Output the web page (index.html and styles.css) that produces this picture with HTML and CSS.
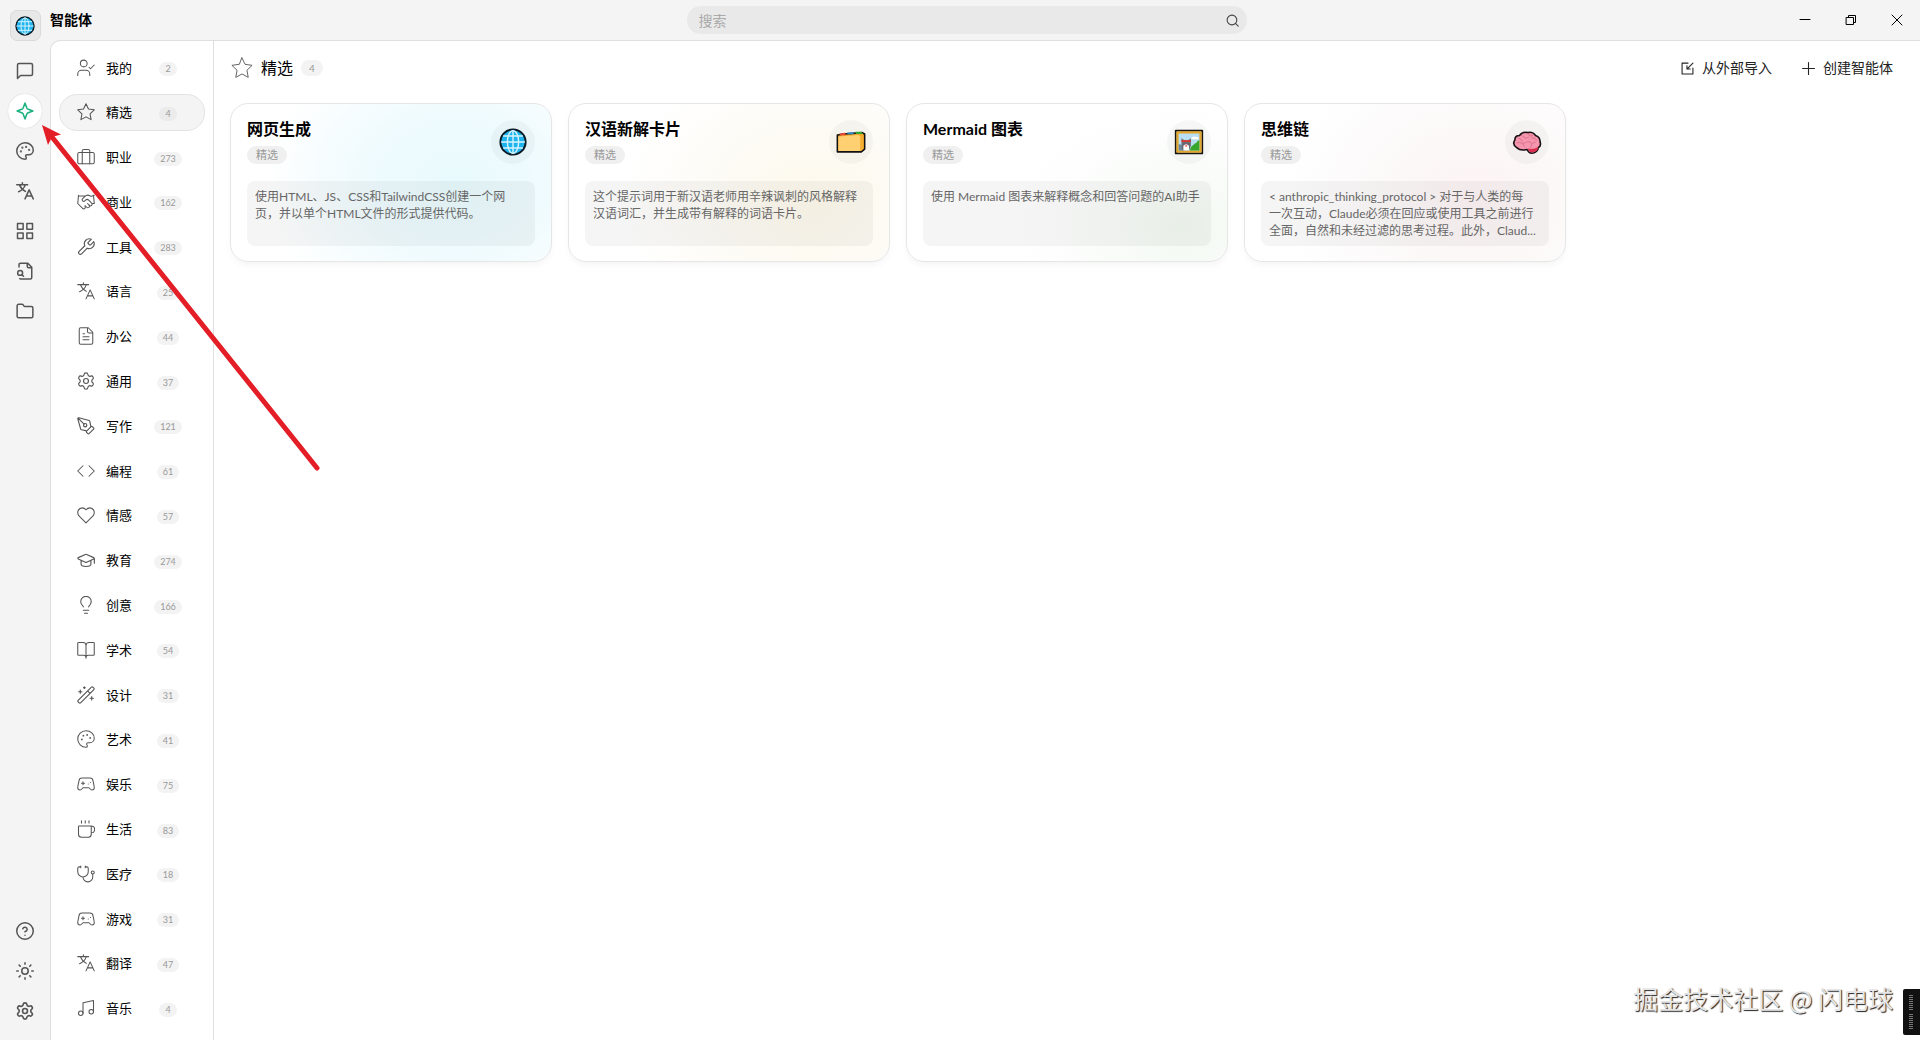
FILE: index.html
```html
<!DOCTYPE html>
<html lang="zh-CN">
<head>
<meta charset="utf-8">
<title>智能体</title>
<link rel="stylesheet" href="styles.css">
</head>
<body>
<svg class="sprite" aria-hidden="true">
  <symbol id="globe" viewBox="0 0 28 28"><circle cx="14" cy="14" r="12.6" fill="#20b4ee" stroke="#0b1a24" stroke-width="2"/><g fill="none" stroke="#d5f4ff" stroke-width="1.4"><ellipse cx="14" cy="14" rx="5.6" ry="11.4"/><path d="M14 2.6v22.8M2.6 14h22.8M4.6 8h18.8M4.6 20h18.8"/></g></symbol>
  <symbol id="message" viewBox="0 0 24 24"><path d="M22 16a2 2 0 0 1-2 2H6l-4 4V4a2 2 0 0 1 2-2h16a2 2 0 0 1 2 2z"/></symbol>
  <symbol id="spark" viewBox="0 0 24 24"><path d="M12 1.500l2.600 6.900a2 2 0 0 0 1 1L22.500 12l-6.900 2.600a2 2 0 0 0-1 1L12 22.500l-2.600-6.900a2 2 0 0 0-1-1L1.500 12l6.900-2.600a2 2 0 0 0 1-1z"/></symbol>
  <symbol id="palette" viewBox="0 0 24 24"><g fill="currentColor"><circle cx="13.500" cy="6.500" r=".5"/><circle cx="17.500" cy="10.500" r=".5"/><circle cx="8.500" cy="7.500" r=".5"/><circle cx="6.500" cy="12.500" r=".5"/></g><path d="M12 1C6 1 1 6 1 12s5 11 11 11c1 0 1.800-.8 1.800-1.800 0-.5-.2-.9-.5-1.200-.3-.3-.5-.7-.5-1.200a1.800 1.800 0 0 1 1.800-1.800h2.400c3.300 0 6-2.700 6-6C23 5.400 18 1 12 1z"/></symbol>
  <symbol id="translate" viewBox="0 0 24 24"><path d="M1 3.500h14.500M8.500 1v2.500M12.500 3.500c-1.500 4.500-4.500 7.500-9 9.500M4.500 3.500c1.500 4 4 7 8 9M12 22.500l5.500-12 5.500 12M13.900 18.500h7.200"/></symbol>
  <symbol id="grid" viewBox="0 0 24 24"><rect x="2" y="2" width="7.500" height="7.500"/><rect x="14.500" y="2" width="7.500" height="7.500"/><rect x="14.500" y="14.500" width="7.500" height="7.500"/><rect x="2" y="14.500" width="7.500" height="7.500"/></symbol>
  <symbol id="filesearch" viewBox="0 0 24 24"><path d="M15 1.500v4a2 2 0 0 0 2 2h4M5 22.200c.3.200.7.300 1.100.300H19a2 2 0 0 0 2-2V7l-5.500-5.500H6a2 2 0 0 0-2 2v3"/><path d="m10 19-2-2"/><circle cx="5.500" cy="14.500" r="3.300"/></symbol>
  <symbol id="folder" viewBox="0 0 24 24"><path d="M20.500 21a2 2 0 0 0 2-2V8a2 2 0 0 0-2-2h-8.400a2 2 0 0 1-1.690-.9L9.600 3.900A2 2 0 0 0 7.930 3H3.500a2 2 0 0 0-2 2v14a2 2 0 0 0 2 2z"/></symbol>
  <symbol id="help" viewBox="0 0 24 24"><circle cx="12" cy="12" r="11"/><path d="M9.090 9a3 3 0 0 1 5.830 1c0 2-3 3-3 3M12 17.500h.01"/></symbol>
  <symbol id="sun" viewBox="0 0 24 24"><circle cx="12" cy="12" r="4.300"/><path d="M12 1v2M12 21v2M4.200 4.200l1.500 1.500M18.300 18.300l1.500 1.500M1 12h2M21 12h2M5.700 18.300l-1.500 1.500M19.800 4.200l-1.500 1.500"/></symbol>
  <symbol id="gear" viewBox="1 1 22 22"><path d="M9.671 4.136a2.340 2.340 0 0 1 4.659 0 2.340 2.340 0 0 0 3.319 1.915 2.340 2.340 0 0 1 2.330 4.033 2.340 2.340 0 0 0 0 3.831 2.340 2.340 0 0 1-2.330 4.033 2.340 2.340 0 0 0-3.319 1.915 2.340 2.340 0 0 1-4.659 0 2.340 2.340 0 0 0-3.320-1.915 2.340 2.340 0 0 1-2.330-4.033 2.340 2.340 0 0 0 0-3.831A2.340 2.340 0 0 1 6.350 6.051a2.340 2.340 0 0 0 3.319-1.915"/><circle cx="12" cy="12" r="3"/></symbol>
  <symbol id="user" viewBox="0 0 24 24"><path d="M1 22v-2a5 5 0 0 1 5-5h6a5 5 0 0 1 5 5v2"/><circle cx="9" cy="6" r="4.500"/><path d="m16 11 2 2 5-5"/></symbol>
  <symbol id="star" viewBox="0 0 24 24"><path d="M12 1l3.300 7 7.700 1.100-5.600 5.400 1.400 7.700L12 18.500l-6.800 3.700 1.400-7.700L1 9.100 8.700 8z"/></symbol>
  <symbol id="case" viewBox="0 0 24 24"><rect x="1" y="6" width="22" height="15" rx="2"/><path d="M7 21V4a2 2 0 0 1 2-2h6a2 2 0 0 1 2 2v17"/></symbol>
  <symbol id="hands" viewBox="0 0 24 24"><path d="m11 17 2 2a1 1 0 1 0 3-3"/><path d="m14 14 2.500 2.500a1 1 0 1 0 3-3l-3.880-3.880a3 3 0 0 0-4.240 0l-.88.88a1 1 0 1 1-3-3l2.810-2.810a5.790 5.790 0 0 1 7.060-.87l.47.28a2 2 0 0 0 1.420.25L23 3M22 3l1 11h-2M2 3 1 14l6.500 6.500a1 1 0 1 0 3-3M2 4h8"/></symbol>
  <symbol id="wrench" viewBox="1 1 22 22"><path d="M14.700 6.300a1 1 0 0 0 0 1.400l1.600 1.600a1 1 0 0 0 1.400 0l3.770-3.770a6 6 0 0 1-7.940 7.940l-6.910 6.910a2.120 2.120 0 0 1-3-3l6.910-6.910a6 6 0 0 1 7.940-7.940z"/></symbol>
  <symbol id="doc" viewBox="0 0 24 24"><path d="M15 1H5a2 2 0 0 0-2 2v18a2 2 0 0 0 2 2h14a2 2 0 0 0 2-2V7zM14 1v5a2 2 0 0 0 2 2h5M8 9h2M8 13h8M8 17h8"/></symbol>
  <symbol id="pen" viewBox="1 1 22 22"><path d="M15.700 21.300a1 1 0 0 1-1.400 0l-1.600-1.600a1 1 0 0 1 0-1.400l5.600-5.600a1 1 0 0 1 1.400 0l1.600 1.600a1 1 0 0 1 0 1.400zM18 13l-1.400-6.900a1 1 0 0 0-.7-.8L3.200 2a1 1 0 0 0-1.200 1.200l3.500 12.700a1 1 0 0 0 .8.7L13 18M2.300 2.300l7.300 7.300"/><circle cx="11" cy="11" r="2"/></symbol>
  <symbol id="code" viewBox="0 0 24 24"><path d="m16 19 7-7-7-7M8 5l-7 7 7 7"/></symbol>
  <symbol id="heart" viewBox="0 0 24 24"><path d="M12 22.500 3 13.500C-1 9 1.500 2.500 7 2.500c2 0 3.500.8 5 2.500 1.500-1.700 3-2.500 5-2.500 5.500 0 8 6.500 4 11z"/></symbol>
  <symbol id="cap" viewBox="1 1 22 22"><path d="M21.400 10.900a1 1 0 0 0 0-1.800L12.800 5.200a2 2 0 0 0-1.600 0L2.600 9.100a1 1 0 0 0 0 1.800l8.600 3.900a2 2 0 0 0 1.600 0zM22.200 10v6M6 12.500V17a6 3 0 0 0 12 0v-4.500"/></symbol>
  <symbol id="bulb" viewBox="0 0 24 24"><path d="M15.500 14.500c.2-1.100.9-2 1.800-2.800A7 7 0 0 0 19 7.500a7 7 0 0 0-14 0c0 1.700.7 3.100 1.700 4.200.9.800 1.600 1.700 1.800 2.800M8.500 19h7M10 23h4"/></symbol>
  <symbol id="book" viewBox="0 0 24 24"><path d="M12 6v17M2 19a1 1 0 0 1-1-1V3a1 1 0 0 1 1-1h6a4 4 0 0 1 4 4 4 4 0 0 1 4-4h6a1 1 0 0 1 1 1v15a1 1 0 0 1-1 1h-7a3 3 0 0 0-3 3 3 3 0 0 0-3-3z"/></symbol>
  <symbol id="wand" viewBox="1 1 22 22"><path d="m21.640 3.640-1.280-1.280a1.210 1.210 0 0 0-1.720 0L2.360 18.640a1.210 1.210 0 0 0 0 1.720l1.280 1.280a1.200 1.200 0 0 0 1.720 0L21.640 5.360a1.200 1.200 0 0 0 0-1.720M14 7l3 3M5 6v4M19 14v4M10 2v2M7 8H3M21 16h-4M11 3H9"/></symbol>
  <symbol id="game" viewBox="0 0 24 24"><path d="M6 11h4M8 9v4M15 12h.01M18 10h.01M17.300 4H6.700a4 4 0 0 0-4 3.600C2.600 8.400 1 14.500 1 17a3 3 0 0 0 3 3c1 0 1.500-.5 2-1l2-2h8l2 2c.5.500 1 1 2 1a3 3 0 0 0 3-3c0-2.500-1.600-8.600-1.700-9.400a4 4 0 0 0-4-3.600z"/></symbol>
  <symbol id="cup" viewBox="0 0 24 24"><path d="M6 1v3M11 1v3M16 1v3M18 8a1 1 0 0 1 1 1v10a4 4 0 0 1-4 4H6a4 4 0 0 1-4-4V9a1 1 0 0 1 1-1h16a4 4 0 1 1 0 9"/></symbol>
  <symbol id="steth" viewBox="0 0 24 24"><path d="M11 1.500v2M5 1.500v2M5 2.500H3a2 2 0 0 0-2 2V9a7 7 0 0 0 14 0V4.500a2 2 0 0 0-2-2h-2M8 16a6.500 6.500 0 0 0 13 0v-4"/><circle cx="21" cy="10" r="2"/></symbol>
  <symbol id="music" viewBox="0 0 24 24"><path d="M8 19V5l14-3v14"/><circle cx="5" cy="19" r="3"/><circle cx="19" cy="17" r="3"/></symbol>
  <symbol id="search" viewBox="0 0 24 24"><circle cx="11" cy="11" r="9"/><path d="m17.500 17.500 5 5"/></symbol>
  <symbol id="import" viewBox="0 0 24 24"><path d="M13 2H2v20h20V11M22 2 11 13M11 7v6h6"/></symbol>
  <symbol id="plus" viewBox="0 0 24 24"><path d="M12 1v22M1 12h22"/></symbol>
</svg>

<div class="app">
  <nav class="rail" aria-label="主导航">
    <button class="avatar" aria-label="头像"><svg><use href="#globe"/></svg></button>
    <button class="rail-btn" aria-label="助手"><svg><use href="#message"/></svg></button>
    <button class="rail-btn active" aria-label="智能体"><svg><use href="#spark"/></svg></button>
    <button class="rail-btn" aria-label="绘画"><svg><use href="#palette"/></svg></button>
    <button class="rail-btn" aria-label="翻译"><svg><use href="#translate"/></svg></button>
    <button class="rail-btn" aria-label="小程序"><svg><use href="#grid"/></svg></button>
    <button class="rail-btn" aria-label="知识库"><svg><use href="#filesearch"/></svg></button>
    <button class="rail-btn" aria-label="文件"><svg><use href="#folder"/></svg></button>
    <div class="rail-end">
      <button class="rail-btn" aria-label="帮助"><svg><use href="#help"/></svg></button>
      <button class="rail-btn" aria-label="主题"><svg><use href="#sun"/></svg></button>
      <button class="rail-btn" aria-label="设置"><svg><use href="#gear"/></svg></button>
    </div>
  </nav>

  <div class="window">
    <header class="titlebar">
      <h1 class="app-title">智能体</h1>
      <label class="search"><input type="text" placeholder="搜索" aria-label="搜索"><svg><use href="#search"/></svg></label>
      <div class="controls">
        <button aria-label="最小化"><svg viewBox="0 0 12 12"><path d="M1 5.500h10"/></svg></button>
        <button aria-label="还原"><svg viewBox="0 0 12 12"><path d="M1.500 3.500h7v7h-7zM3.500 3.500v-2h7v7h-2"/></svg></button>
        <button aria-label="关闭"><svg viewBox="0 0 12 12"><path d="M1 1l10 10M11 1 1 11"/></svg></button>
      </div>
    </header>

    <div class="body">
      <aside class="categories">
        <button class="cat"><svg><use href="#user"/></svg><span>我的</span><span class="count">2</span></button>
        <button class="cat selected"><svg><use href="#star"/></svg><span>精选</span><span class="count">4</span></button>
        <button class="cat"><svg><use href="#case"/></svg><span>职业</span><span class="count">273</span></button>
        <button class="cat"><svg><use href="#hands"/></svg><span>商业</span><span class="count">162</span></button>
        <button class="cat"><svg><use href="#wrench"/></svg><span>工具</span><span class="count">283</span></button>
        <button class="cat"><svg><use href="#translate"/></svg><span>语言</span><span class="count">25</span></button>
        <button class="cat"><svg><use href="#doc"/></svg><span>办公</span><span class="count">44</span></button>
        <button class="cat"><svg><use href="#gear"/></svg><span>通用</span><span class="count">37</span></button>
        <button class="cat"><svg><use href="#pen"/></svg><span>写作</span><span class="count">121</span></button>
        <button class="cat"><svg><use href="#code"/></svg><span>编程</span><span class="count">61</span></button>
        <button class="cat"><svg><use href="#heart"/></svg><span>情感</span><span class="count">57</span></button>
        <button class="cat"><svg><use href="#cap"/></svg><span>教育</span><span class="count">274</span></button>
        <button class="cat"><svg><use href="#bulb"/></svg><span>创意</span><span class="count">166</span></button>
        <button class="cat"><svg><use href="#book"/></svg><span>学术</span><span class="count">54</span></button>
        <button class="cat"><svg><use href="#wand"/></svg><span>设计</span><span class="count">31</span></button>
        <button class="cat"><svg><use href="#palette"/></svg><span>艺术</span><span class="count">41</span></button>
        <button class="cat"><svg><use href="#game"/></svg><span>娱乐</span><span class="count">75</span></button>
        <button class="cat"><svg><use href="#cup"/></svg><span>生活</span><span class="count">83</span></button>
        <button class="cat"><svg><use href="#steth"/></svg><span>医疗</span><span class="count">18</span></button>
        <button class="cat"><svg><use href="#game"/></svg><span>游戏</span><span class="count">31</span></button>
        <button class="cat"><svg><use href="#translate"/></svg><span>翻译</span><span class="count">47</span></button>
        <button class="cat"><svg><use href="#music"/></svg><span>音乐</span><span class="count">4</span></button>
      </aside>

      <main class="content">
        <div class="toolbar">
          <svg class="toolbar-star"><use href="#star"/></svg>
          <h2>精选</h2>
          <span class="total">4</span>
          <div class="actions">
            <button><svg><use href="#import"/></svg>从外部导入</button>
            <button><svg><use href="#plus"/></svg>创建智能体</button>
          </div>
        </div>

        <div class="cards">
          <article class="card cyan">
            <div class="card-head">
              <div><h3>网页生成</h3><span class="tag">精选</span></div>
              <span class="emoji"><svg><use href="#globe"/></svg></span>
            </div>
            <p class="desc">使用HTML、JS、CSS和TailwindCSS创建一个网页，并以单个HTML文件的形式提供代码。</p>
          </article>
          <article class="card yellow">
            <div class="card-head">
              <div><h3>汉语新解卡片</h3><span class="tag">精选</span></div>
              <span class="emoji"><svg viewBox="0 0 32 28"><path d="M1.500 6.500 8 5.500l20-1.500 2.500 1.500v16L27 24.500H1.500z" fill="#f0a52a" stroke="#111" stroke-width="1.800" stroke-linejoin="round"/><path d="M4 4.800 10 4.200v2.500H4z" fill="#e8443a"/><path d="M12 3.800h7v2h-7z" fill="#2686c4"/><path d="M21 3h6l2 2.500h-8z" fill="#35a835"/><path d="M2.500 8 24 6.500l2 1v16H2.500z" fill="#ffd071"/><path d="m26.500 7.500 3-1v14.500l-3 2.500z" fill="#f5ae2f"/></svg></span>
            </div>
            <p class="desc">这个提示词用于新汉语老师用辛辣讽刺的风格解释汉语词汇，并生成带有解释的词语卡片。</p>
          </article>
          <article class="card green">
            <div class="card-head">
              <div><h3>Mermaid 图表</h3><span class="tag">精选</span></div>
              <span class="emoji"><svg viewBox="0 0 32 28"><path d="M1.800 1.800h28.400v24.400H1.800z" fill="#b9dff5" stroke="#171310" stroke-width="1.800"/><path d="M3.700 3.700h24.600v20.600H3.700z" fill="none" stroke="#e3a52b" stroke-width="2.400"/><path d="M17 23c1-5 3-5 4-6 1-2 3-1 4-4l2-1v11z" fill="#36a62c"/><path d="m18 10 3-2 5 1v2h-7z" fill="#fff"/><path d="M5 23v-7l3 1 3 6z" fill="#6d879c"/><path d="m8 10 3 2h4l3-2v8l-2 5H9l-1-5z" fill="#6a6a75"/><path d="M8 12h10v2H8z" fill="#d73a32"/><path d="m10 18 3-2 3 2v5h-6z" fill="#fff"/><path d="M12 17h2v2h-2z" fill="#e66"/></svg></span>
            </div>
            <p class="desc">使用 Mermaid 图表来解释概念和回答问题的AI助手</p>
          </article>
          <article class="card pink">
            <div class="card-head">
              <div><h3>思维链</h3><span class="tag">精选</span></div>
              <span class="emoji"><svg viewBox="0 0 32 28"><path d="M5 20c-3-2-4-5-2-8 0-3 2-5 5-5 2-3 6-4 9-3 4-1 7 1 8 3 4 1 5 4 5 7 1 3 0 5-2 6 0 3-3 6-7 6-3 0-4-2-5-4-4 1-8 1-11-2z" fill="#f497ae" stroke="#181014" stroke-width="1.700"/><path d="M17 21c4 1 8 0 11-2 0 4-3 6-7 6-2 0-4-2-4-4z" fill="#d92e50"/><path d="M7 10c2 0 3 1 4 3M10 7c2 0 3 1 4 3l4-1M17 5c1 2 3 3 5 2M21 10c2-1 4 0 5 2M5 15c2-1 5-1 6 1l5-2c2-1 4 0 5 2l4-2M12 16l1 3M21 16l-1 4" fill="none" stroke="#e27a95" stroke-width="1.200" stroke-linecap="round"/></svg></span>
            </div>
            <p class="desc">&lt; anthropic_thinking_protocol &gt; 对于与人类的每<br>一次互动，Claude必须在回应或使用工具之前进行<br>全面，自然和未经过滤的思考过程。此外，Claud...</p>
          </article>
        </div>
      </main>
    </div>
  </div>

  <svg class="arrow" viewBox="0 0 330 480" aria-hidden="true"><path d="M52 137 317 468" stroke="#e31e26" stroke-width="5" stroke-linecap="round"/><path d="M42 125 61 134.500 52 137 48 145z" fill="#e31e26" stroke="none"/></svg>
  <p class="watermark">掘金技术社区 @ 闪电球</p>
  <div class="meter"><i></i><i></i></div>
</div>
</body>
</html>
```

FILE: styles.css
```css
* { box-sizing: border-box; }

body, h1, h2, h3, p { margin: 0; }

body {
  background: #f4f4f4;
  color: #000;
  font-family: Lato, "Noto Sans CJK SC", sans-serif;
  font-size: 13px;
}

button, input {
  font: inherit;
  color: inherit;
  border: 0;
  padding: 0;
  background: none;
}

svg {
  display: block;
  fill: none;
  stroke: currentColor;
  stroke-linecap: round;
  stroke-linejoin: round;
}

.sprite { display: none; }

.app {
  position: relative;
  display: flex;
  min-height: 100vh;
  overflow: hidden;
}

/* Left icon rail */
.rail {
  width: 50px;
  flex: none;
  display: flex;
  flex-direction: column;
  align-items: center;
  gap: 6px;
  padding: 10px 0 12px;
  color: #555;
}

.avatar {
  width: 31px;
  height: 31px;
  margin-bottom: 7px;
  display: grid;
  place-items: center;
  border: 1px solid #dadada;
  border-radius: 7px;
  background: #e8e8e8;
}

.avatar svg { width: 20px; height: 20px; stroke: none; }

.rail-btn {
  width: 34px;
  height: 34px;
  flex: none;
  display: grid;
  place-items: center;
  border-radius: 50%;
}

.rail-btn svg { width: 18px; height: 18px; stroke-width: 2; }

.rail-btn.active {
  background: #fff;
  color: #1bb17c;
  box-shadow: 0 0 1px #bbb;
}

.rail-end {
  margin-top: auto;
  display: flex;
  flex-direction: column;
  gap: 6px;
}

/* Title bar */
.window {
  flex: 1;
  min-width: 0;
  display: flex;
  flex-direction: column;
}

.titlebar {
  height: 40px;
  flex: none;
  display: flex;
  align-items: center;
}

.app-title {
  flex: 1 1 101px;
  font-size: 14px;
  line-height: 20px;
  white-space: nowrap;
}

.search {
  flex: 0 1 560px;
  height: 28px;
  display: flex;
  align-items: center;
  padding: 0 8px 0 12px;
  border-radius: 14px;
  background: #e9e9e9;
  color: #444;
}

.search input { flex: 1; min-width: 0; font-size: 14px; outline: 0; }
.search input::placeholder { color: #aaa; opacity: 1; }
.search svg { width: 13px; height: 13px; stroke-width: 2; }

.controls {
  flex: 1 1 138px;
  display: flex;
  justify-content: flex-end;
}

.controls button {
  width: 46px;
  height: 40px;
  display: grid;
  place-items: center;
}

.controls svg { width: 12px; height: 12px; stroke-width: 1; }

/* Body */
.body {
  flex: 1;
  display: flex;
  border: solid #dfdfdf;
  border-width: 1px 0 0 1px;
  border-radius: 10px 0 0 0;
  background: #fff;
}

.categories {
  width: 163px;
  flex: none;
  display: flex;
  flex-direction: column;
  justify-content: space-between;
  gap: 7px;
  padding: 8px 8px 13px;
  border-right: 1px solid #dfdfdf;
}

.cat {
  height: 37px;
  display: grid;
  grid-template-columns: 18px 26px 50px;
  column-gap: 11px;
  align-items: center;
  justify-items: center;
  padding: 0 17px;
  border: 1px solid transparent;
  border-radius: 18px;
  line-height: 20px;
}

.cat svg { width: 18px; height: 18px; color: #555; stroke-width: 1.4; }
.cat.selected { background: #f4f4f4; border-color: #e3e3e3; }

.count, .total {
  border-radius: 9px;
  background: #f3f3f3;
  color: #999;
}

.count {
  margin-top: 3px;
  padding: 0 6px;
  font-size: 9px;
  line-height: 14px;
}

.selected .count { background: #ebebeb; }

.content { flex: 1; min-width: 0; padding: 0 16px; }

.toolbar {
  height: 54px;
  margin-bottom: 8px;
  display: flex;
  align-items: center;
}

.toolbar-star { width: 22px; height: 22px; margin-left: 1px; color: #555; stroke-width: 1; }
.toolbar h2 { margin: 0 8px; font-size: 16px; font-weight: 400; line-height: 24px; }
.total { padding: 0 8px; font-size: 10px; line-height: 16px; }

.actions { margin-left: auto; display: flex; gap: 30px; padding-right: 11px; }
.actions button { display: flex; align-items: center; gap: 8px; font-size: 14px; line-height: 22px; color: #222; }
.actions svg { width: 13px; height: 13px; stroke-width: 2; }

/* Agent cards */
.cards {
  display: grid;
  grid-template-columns: repeat(auto-fill, minmax(300px, 1fr));
  gap: 16px;
}

.card {
  padding: 14px 16px 15px;
  border: 1px solid #e6e6e6;
  border-radius: 18px;
  box-shadow: 0 4px 8px -2px #0000000d;
}

.cyan { background: radial-gradient(ellipse 190px 150px at 70% 50%, #e8fafd, #f0fbfe 50%, #fff); }
.yellow { background: radial-gradient(ellipse 190px 150px at 76% 62%, #fef9ec, #fdfbf5 50%, #fff); }
.green { background: radial-gradient(ellipse 170px 120px at 86% 78%, #f2f9f1, #fafcfa 50%, #fff); }
.pink { background: radial-gradient(ellipse 190px 150px at 72% 60%, #fdf3f4, #fcf9f9 50%, #fff); }

.card-head { display: flex; justify-content: space-between; align-items: flex-end; }
.card h3 { font-size: 16px; line-height: 22px; margin-bottom: 6px; }

.tag {
  display: inline-block;
  padding: 0 9px;
  border-radius: 9px;
  background: #f0f0f0;
  color: #999;
  font-size: 11px;
  line-height: 18px;
}

.emoji {
  width: 44px;
  height: 44px;
  display: grid;
  place-items: center;
  border-radius: 50%;
  background: #00000008;
}

.emoji svg { width: 30px; height: 28px; stroke: none; }

.desc {
  min-height: 65px;
  margin-top: 17px;
  padding: 7px 8px;
  border-radius: 8px;
  background: #0000000a;
  color: #666;
  font-size: 12px;
  line-height: 17px;
}

/* Overlays */
.arrow { position: absolute; left: 0; top: 0; width: 330px; height: 480px; pointer-events: none; }

.watermark {
  position: absolute;
  right: 27px;
  bottom: 24px;
  color: #e6e6e6;
  font-family: "Noto Sans CJK SC", sans-serif;
  font-size: 25px;
  line-height: 36px;
  text-shadow: 1px 1px 1px #222;
}

.meter {
  position: absolute;
  right: 0;
  bottom: 5px;
  width: 17px;
  height: 46px;
  display: flex;
  flex-direction: column;
  gap: 3px;
  padding: 6px 7px 5px 6px;
  border-radius: 2px 0 0 2px;
  background: #111;
}

.meter i { flex: 1; background: repeating-linear-gradient(#777 0 1px, #111 1px 2px); }
```
